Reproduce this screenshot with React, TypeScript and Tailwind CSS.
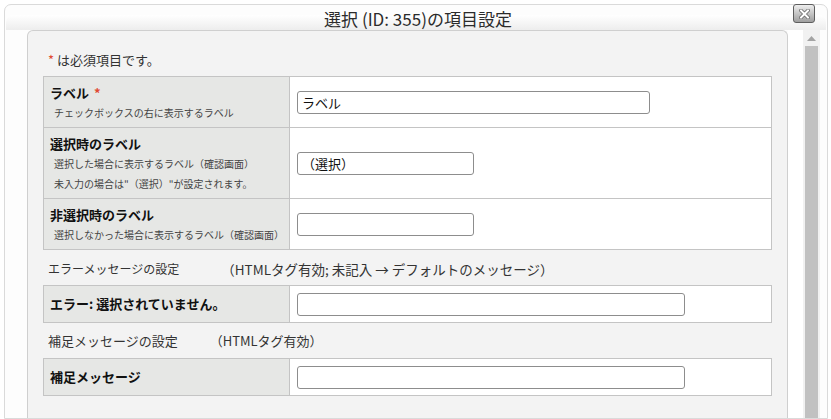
import React from 'react';

const jp = "font-['Noto_Sans_CJK_JP','Noto_Sans',sans-serif]";

interface FieldRow {
  title: string;
  required?: boolean;
  notes: string[];
  value: string;
  inputWidth: string;
}

const rows: FieldRow[] = [
  {
    title: 'ラベル',
    required: true,
    notes: ['チェックボックスの右に表示するラベル'],
    value: 'ラベル',
    inputWidth: 'w-[353px]',
  },
  {
    title: '選択時のラベル',
    notes: ['選択した場合に表示するラベル（確認画面）', '未入力の場合は"（選択）"が設定されます。'],
    value: '（選択）',
    inputWidth: 'w-[177px]',
  },
  {
    title: '非選択時のラベル',
    notes: ['選択しなかった場合に表示するラベル（確認画面）'],
    value: '',
    inputWidth: 'w-[177px]',
  },
];

const TextBox: React.FC<{ value?: string; width: string }> = ({ value = '', width }) => (
  <div
    className={`${width} h-[23px] border border-[#8d8d8d] rounded-[3px] bg-white px-[4px] text-[13px] leading-[21px] text-[#111]`}
  >
    {value}
  </div>
);

const CloseButton = () => (
  <div className="absolute right-[12px] top-[-1px] w-[22px] h-[19px] rounded-[3px] border border-[#5e5e5e] bg-gradient-to-b from-[#eeeeee] to-[#9f9f9f] flex items-center justify-center">
    <svg width="11" height="10" viewBox="0 0 11 10">
      <path d="M2 1.5 L9 8.5 M9 1.5 L2 8.5" stroke="#666666" strokeWidth="3.6" strokeLinecap="square" />
      <path d="M2 1.5 L9 8.5 M9 1.5 L2 8.5" stroke="#ffffff" strokeWidth="2" strokeLinecap="square" />
    </svg>
  </div>
);

const Scrollbar = () => (
  <div className="w-[17px] bg-[#f1f1f1] flex flex-col items-center pt-[6px]">
    <svg width="9" height="5" viewBox="0 0 9 5">
      <path d="M0 5 L4.5 0 L9 5 Z" fill="#a3a3a3" />
    </svg>
    <div className="mt-[5px] w-[13px] flex-1 bg-[#c1c1c1]" />
  </div>
);

export default function App() {
  return (
    <div className={`w-[831px] h-[419px] bg-white overflow-hidden ${jp}`}>
      <div className="ml-[4px] mt-[4px] w-[824px] h-[415px] border border-[#dadada] rounded-t-[7px] bg-[#fdfdfd] flex flex-col">
        {/* title bar */}
        <div className="relative h-[25px] shrink-0">
          <div className="absolute left-[1px] right-[1px] top-[10px] bottom-0 rounded-t-[7px] bg-gradient-to-b from-[#ffffff] to-[#ededed]" />
          <div className="relative text-center text-[17px] leading-[28px] text-[#2b2b2b] pl-[4px]">
            選択 (ID: 355)の項目設定
          </div>
          <CloseButton />
        </div>

        <div className="flex flex-1 min-h-0">
          <div className="w-[22px]" />
          <div className="w-[761px] border border-b-0 border-[#cfcfcf] rounded-t-[6px] bg-[#f3f3f3] px-[15px] pt-[19px] overflow-hidden">
            <div className="text-[13px] leading-[20px] text-[#333] pl-[5px] mb-[6px]">
              <span className="text-[#e04a32]">*</span> は必須項目です。
            </div>

            <div className="border border-[#c4c4c4] bg-white">
              {rows.map((row, i) => (
                <div key={row.title} className={`flex ${i > 0 ? 'border-t border-[#c4c4c4]' : ''}`}>
                  <div className="w-[246px] shrink-0 bg-[#e6e7e5] border-r border-[#c4c4c4] pl-[6px] pt-[5px] pb-[4px]">
                    <div className="text-[13px] leading-[21px] font-bold text-[#111]">
                      {row.title}
                      {row.required && <span className="ml-[5px] text-[#e04a32]">*</span>}
                    </div>
                    {row.notes.map(n => (
                      <div key={n} className="pl-[4px] text-[10px] leading-[20px] text-[#444]">
                        {n}
                      </div>
                    ))}
                  </div>
                  <div className="flex-1 flex items-center pl-[7px]">
                    <TextBox value={row.value} width={row.inputWidth} />
                  </div>
                </div>
              ))}
            </div>

            <div className="h-[35px] pt-[9px] pl-[5px] text-[#333] flex items-start">
              <span className="text-[12px] leading-[20px]">エラーメッセージの設定</span>
              <span className="ml-[42px] text-[13.5px] leading-[20px]">（HTMLタグ有効; 未記入 → デフォルトのメッセージ）</span>
            </div>

            <div className="border border-[#c4c4c4] bg-white flex h-[38px]">
              <div className="w-[246px] shrink-0 bg-[#e6e7e5] border-r border-[#c4c4c4] pl-[6px] flex items-center">
                <span className="text-[13px] font-bold text-[#111]">エラー: 選択されていません。</span>
              </div>
              <div className="flex-1 flex items-center pl-[7px]">
                <TextBox width="w-[388px]" />
              </div>
            </div>

            <div className="h-[35px] pt-[8px] pl-[5px] text-[13px] leading-[20px] text-[#333] flex items-start">
              <span>補足メッセージの設定</span>
              <span className="ml-[32px]">（HTMLタグ有効）</span>
            </div>

            <div className="border border-[#c4c4c4] bg-white flex h-[38px]">
              <div className="w-[246px] shrink-0 bg-[#e6e7e5] border-r border-[#c4c4c4] pl-[6px] flex items-center">
                <span className="text-[13px] font-bold text-[#111]">補足メッセージ</span>
              </div>
              <div className="flex-1 flex items-center pl-[7px]">
                <TextBox width="w-[388px]" />
              </div>
            </div>
          </div>
          <div className="w-[15px] bg-white" />
          <Scrollbar />
          <div className="w-[7px]" />
        </div>
      </div>
    </div>
  );
}
